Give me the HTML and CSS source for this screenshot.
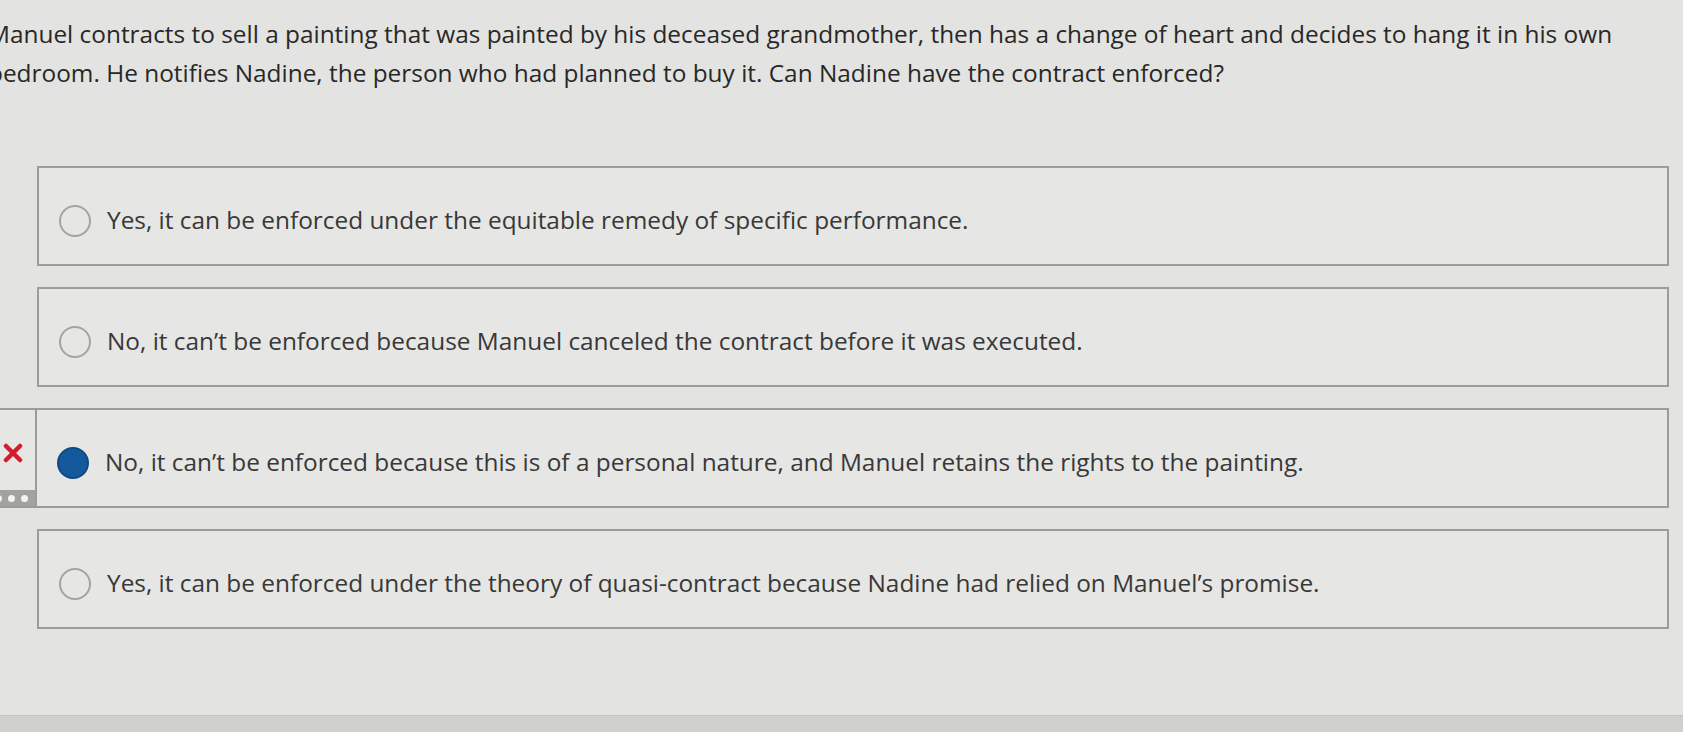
FILE: index.html
```html
<!DOCTYPE html>
<html lang="en">
<head>
  <meta charset="UTF-8" />
  <meta name="viewport" content="width=device-width, initial-scale=1.0" />
  <title>Question</title>
  <link rel="stylesheet" href="styles.css">
</head>
<body>

  <div id="question">
    <p class="prompt">Manuel contracts to sell a painting that was painted by his deceased grandmother, then has a change of heart and decides to hang it in his own bedroom. He notifies Nadine, the person who had planned to buy it. Can Nadine have the contract enforced?</p>

    <ul class="choices">
      <li class="choice">
        <span class="radio"></span>
        <span class="label">Yes, it can be enforced under the equitable remedy of specific performance.</span>
      </li>
      <li class="choice">
        <span class="radio"></span>
        <span class="label">No, it can’t be enforced because Manuel canceled the contract before it was executed.</span>
      </li>
      <li class="choice graded">
        <div class="feedback">
          <svg class="wrong" width="20" height="20" viewBox="0 0 20 20">
            <path d="M3 3 L17 17 M17 3 L3 17" stroke="#d51c2c" stroke-width="4.5" stroke-linecap="round" fill="none"/>
          </svg>
          <div class="dots"><span></span><span></span><span></span></div>
        </div>
        <div class="choice-body">
          <span class="radio checked"></span>
          <span class="label">No, it can’t be enforced because this is of a personal nature, and Manuel retains the rights to the painting.</span>
        </div>
      </li>
      <li class="choice">
        <span class="radio"></span>
        <span class="label">Yes, it can be enforced under the theory of quasi-contract because Nadine had relied on Manuel’s promise.</span>
      </li>
    </ul>
  </div>

  <div id="bottom-bar"></div>

</body>
</html>
```

FILE: styles.css
```css
body {
  margin: 0;
  padding: 0;
  background: #e3e3e1;
  color: #282828;
  font-family: "Open Sans", "Liberation Sans", sans-serif;
  font-size: 24.4px;
  height: 732px;
  overflow: hidden;
}

#question {
  padding-left: 37px;
}

.prompt {
  margin: 14px 0 0 -49px;
  width: 1690px;
  line-height: 39px;
}

.choices {
  list-style: none;
  margin: 74px 0 0 0;
  padding: 0;
  width: 1632px;
  display: flex;
  flex-direction: column;
  gap: 21px;
}

.choice {
  box-sizing: border-box;
  height: 100px;
  border: 2px solid #9c9c9a;
  background: #e6e6e4;
  display: flex;
  align-items: center;
  padding: 8px 0 0 20px;
  color: #383838;
}

.radio {
  box-sizing: border-box;
  width: 32px;
  height: 32px;
  border: 2px solid #a3a3a1;
  border-radius: 50%;
  margin-top: 2px;
  flex-shrink: 0;
}

.radio.checked {
  background: #14599c;
  border-color: #0f4a85;
}

.label {
  margin-left: 16px;
  line-height: 32px;
  white-space: nowrap;
}

.choice.graded {
  margin-left: -37px;
  width: 1669px;
  padding: 0;
  border-left: none;
  align-items: stretch;
}

.feedback {
  width: 35px;
  border-right: 2px solid #9c9c9a;
  display: flex;
  flex-direction: column;
  align-items: flex-start;
  flex-shrink: 0;
}

.wrong {
  margin: 33px 0 0 3px;
}

.dots {
  margin-top: auto;
  height: 16px;
  background: #a2a2a0;
  display: flex;
  align-items: center;
  gap: 6px;
  width: 35px;
  overflow: hidden;
}

.dots span {
  width: 7px;
  height: 7px;
  border-radius: 50%;
  background: #f4f4f4;
  flex-shrink: 0;
}

.dots span:first-child {
  margin-left: -5px;
}

.choice-body {
  display: flex;
  align-items: center;
  padding: 8px 0 0 20px;
}

#bottom-bar {
  margin-top: 86px;
  height: 20px;
  background: #cfcfcd;
  border-top: 1px solid #c4c4c2;
}
```
